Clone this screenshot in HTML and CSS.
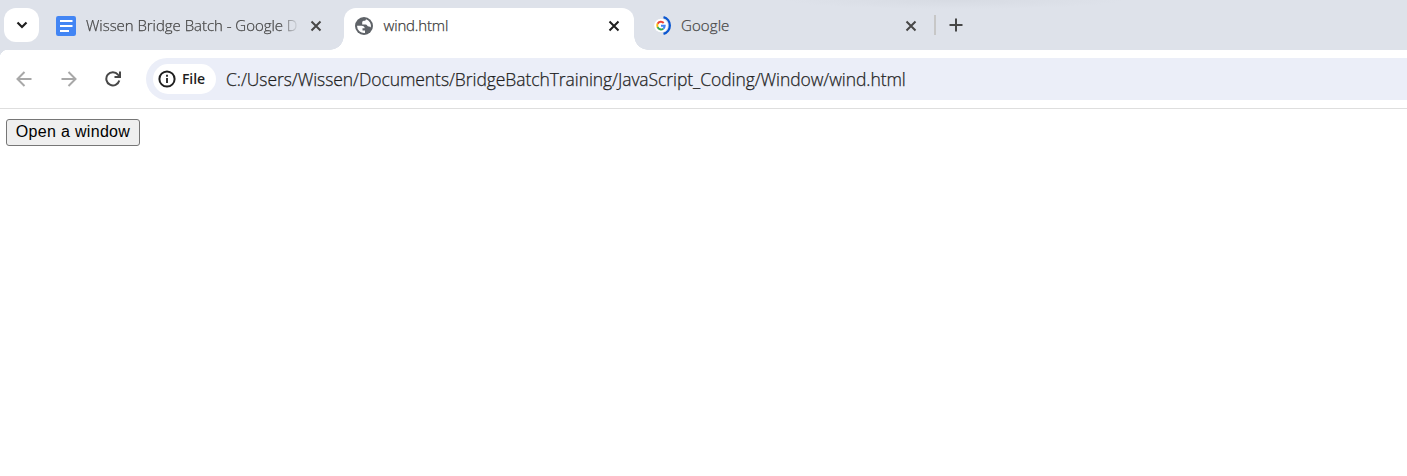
FILE: index.html
```html
<!DOCTYPE html>
<html lang="en">
<head>
<meta charset="utf-8">
<title>wind.html</title>
<link rel="stylesheet" href="styles.css">
</head>
<body>
<header class="tabstrip">
  <div class="tab-search"><svg width="12" height="8" viewBox="0 0 12 8"><path d="M1.5 1.5 6 6l4.500-4.500" fill="none" stroke="#1f1f1f" stroke-width="2.200"/></svg></div>
  <div class="tab tab-docs">
    <svg class="favicon" viewBox="0 0 20 20"><rect width="20" height="20" rx="2.200" fill="#4285f4"/><path d="M4 5h12.500M4 10h12.500M4 15h9" stroke="#fff" stroke-width="2.200"/></svg>
    <span class="tab-title title-docs">Wissen Bridge Batch - Google D</span>
    <svg class="close" viewBox="0 0 12 12"><path d="m1.500 1.500 9 9m0-9-9 9"/></svg>
  </div>
  <div class="tab tab-active">
    <svg class="favicon" viewBox="0 0 20 20"><circle cx="10" cy="10" r="9" fill="#5f6368"/><path fill="#fff" d="M3 9.800h4.500c2 0 3.200 1 3.200 2.500h-2.200v2.200h2.500v2.400A7.100 7.100 0 0 1 3 9.800ZM12 3.200a7.100 7.100 0 0 1 4.800 8.300c-.6-.7-1.200-1-2-1-1.800 0-1.500-2-3.300-2H8.200V6.300c0-1 1-1.500 2.200-1.500.8 0 1.300-.6 1.600-1.600Z"/></svg>
    <span class="tab-title">wind.html</span>
    <svg class="close" viewBox="0 0 12 12"><path d="m1.500 1.500 9 9m0-9-9 9"/></svg>
  </div>
  <div class="tab tab-google">
    <svg class="favicon" viewBox="0 0 20 20"><circle cx="8" cy="9.500" r="6.800" fill="#fff"/><g fill="none" stroke-width="2"><path d="M10.700 7A3.800 3.800 0 0 0 4.600 7.800" stroke="#ea4335"/><path d="M4.600 7.800a3.800 3.800 0 0 0 0 3.400" stroke="#fbbc05"/><path d="M4.600 11.200a3.800 3.800 0 0 0 5.700 1.500" stroke="#34a853"/><path d="M10.300 12.700a3.800 3.800 0 0 0 1.400-2.900H8" stroke="#4285f4"/><path d="M10.500 1.200a8.600 8.600 0 0 1 0 16.600" stroke="#0b57d0" stroke-width="2.300"/></g></svg>
    <span class="tab-title">Google</span>
    <svg class="close" viewBox="0 0 12 12"><path d="m1.500 1.500 9 9m0-9-9 9"/></svg>
  </div>
  <div class="divider"></div>
  <svg class="new-tab" viewBox="0 0 14 14"><path d="M7 .5v13M.5 7h13" stroke="#474747" stroke-width="2"/></svg>
</header>
<nav class="toolbar">
  <svg class="nav-icon faded" viewBox="0 0 16 16"><path d="M15.500 8H2M8.500 1 1.500 8l7 7"/></svg>
  <svg class="nav-icon faded" viewBox="0 0 16 16"><path d="M.5 8H14M7.500 1l7 7-7 7"/></svg>
  <svg class="nav-icon" viewBox="0 0 16 16"><path d="M14.300 9.500A6.600 6.600 0 1 1 13 3.600l1.800 2M15 .5V6H9.500"/></svg>
  <div class="omnibox">
    <div class="chip">
      <svg class="info" viewBox="0 0 18 18"><circle cx="9" cy="9" r="7.600" fill="none" stroke="#1f1f1f" stroke-width="2"/><path d="M9 8v5M9 4.800v2" stroke="#1f1f1f" stroke-width="1.800"/></svg>
      <span class="chip-label">File</span>
    </div>
    <span class="url">C:/Users/Wissen/Documents/BridgeBatchTraining/JavaScript_Coding/Window/wind.html</span>
  </div>
</nav>
<main class="page"><button class="open-button">Open a window</button></main>
</body>
</html>
```
FILE: styles.css
```css
* { box-sizing: border-box; }
body { margin: 0; height: 476px; overflow: hidden; background: #fff; font-family: "Open Sans", sans-serif; color: #1f1f1f; }
svg { display: block; flex: none; }
.tabstrip { display: flex; height: 50px; background: radial-gradient(ellipse 170px 9px at 955px 0, #d7dbe3, #dee2ea); padding-left: 4px; }
.tab-search { width: 35px; height: 34px; margin-top: 8px; border-radius: 12px; background: #fff; display: flex; align-items: center; justify-content: center; }
.tab { display: flex; height: 42px; margin-top: 8px; padding-bottom: 7px; align-items: center; }
.tab-docs { width: 305px; padding-left: 17px; }
.tab-active { position: relative; width: 290px; padding-left: 10px; background: #fff; border-radius: 12px 12px 0 0; }
.tab-active::before, .tab-active::after { content: ""; position: absolute; bottom: 0; width: 14px; height: 14px; }
.tab-active::before { right: 100%; background: radial-gradient(circle at 0 0, transparent 13.500px, #fff 14px); }
.tab-active::after { left: 100%; background: radial-gradient(circle at 100% 0, transparent 13.500px, #fff 14px); }
.tab-google { width: 300px; padding-left: 19px; }
.favicon { width: 20px; height: 20px; }
.tab-title { margin-left: 10px; padding-bottom: 2px; font-size: 15px; line-height: 22px; font-weight: 300; letter-spacing: -.04px; -webkit-text-stroke: .25px #474747; color: #474747; white-space: nowrap; }
.tab-google .tab-title { margin-left: 8px; letter-spacing: .1px; }
.tab-active .tab-title { margin-left: 9.500px; color: #333; letter-spacing: -.16px; }
.title-docs { width: 212px; -webkit-mask-image: linear-gradient(90deg, #000 194px, transparent 213px); mask-image: linear-gradient(90deg, #000 194px, transparent 213px); }
.close { width: 12px; height: 12px; margin-left: auto; fill: none; stroke: #474747; stroke-width: 2; }
.tab-docs .close { margin-right: 22px; }
.tab-active .close { margin-right: 14.500px; stroke: #1f1f1f; }
.tab-google .close { margin-right: 17px; }
.divider { width: 2px; height: 20px; margin: 15px 0 0; background: #c7c7c7; }
.new-tab { width: 14px; height: 14px; margin: 18px 0 0 13px; }
.toolbar { display: flex; align-items: center; height: 59px; padding-left: 16px; border-bottom: 1px solid #dedede; background: radial-gradient(circle at 8px 8px, #fff 8px, #dee2ea 8.500px) 0 0 / 8px 8px no-repeat; }
.nav-icon { width: 16px; height: 16px; margin-right: 28.500px; fill: none; stroke: #474747; stroke-width: 2; }
.faded { stroke: #a8a8a8; }
.toolbar .nav-icon:nth-child(3) { margin-right: 25px; }
.omnibox { display: flex; align-items: center; flex: 1; height: 42px; padding-left: 7px; border-radius: 21px 0 0 21px; background: #ebeef8; }
.chip { display: flex; align-items: center; width: 63px; height: 30px; padding-left: 5px; border-radius: 15px; background: #fff; }
.info { width: 18px; height: 18px; }
.chip-label { margin-left: 6px; font-size: 14px; line-height: 20px; font-weight: 600; letter-spacing: -.1px; }
.url { margin-left: 10px; font-size: 17.500px; line-height: 24px; font-weight: 300; letter-spacing: -.07px; -webkit-text-stroke: .25px #1f1f1f; white-space: nowrap; }
.page { padding: 10px 6px; }
.open-button { display: block; width: 134px; height: 27px; padding: 0 0 2px; border: 1px solid #767676; border-radius: 3px; background: #efefef; color: #000; font: 16px/22px "Liberation Sans", Arial, sans-serif; letter-spacing: .32px; }
```
